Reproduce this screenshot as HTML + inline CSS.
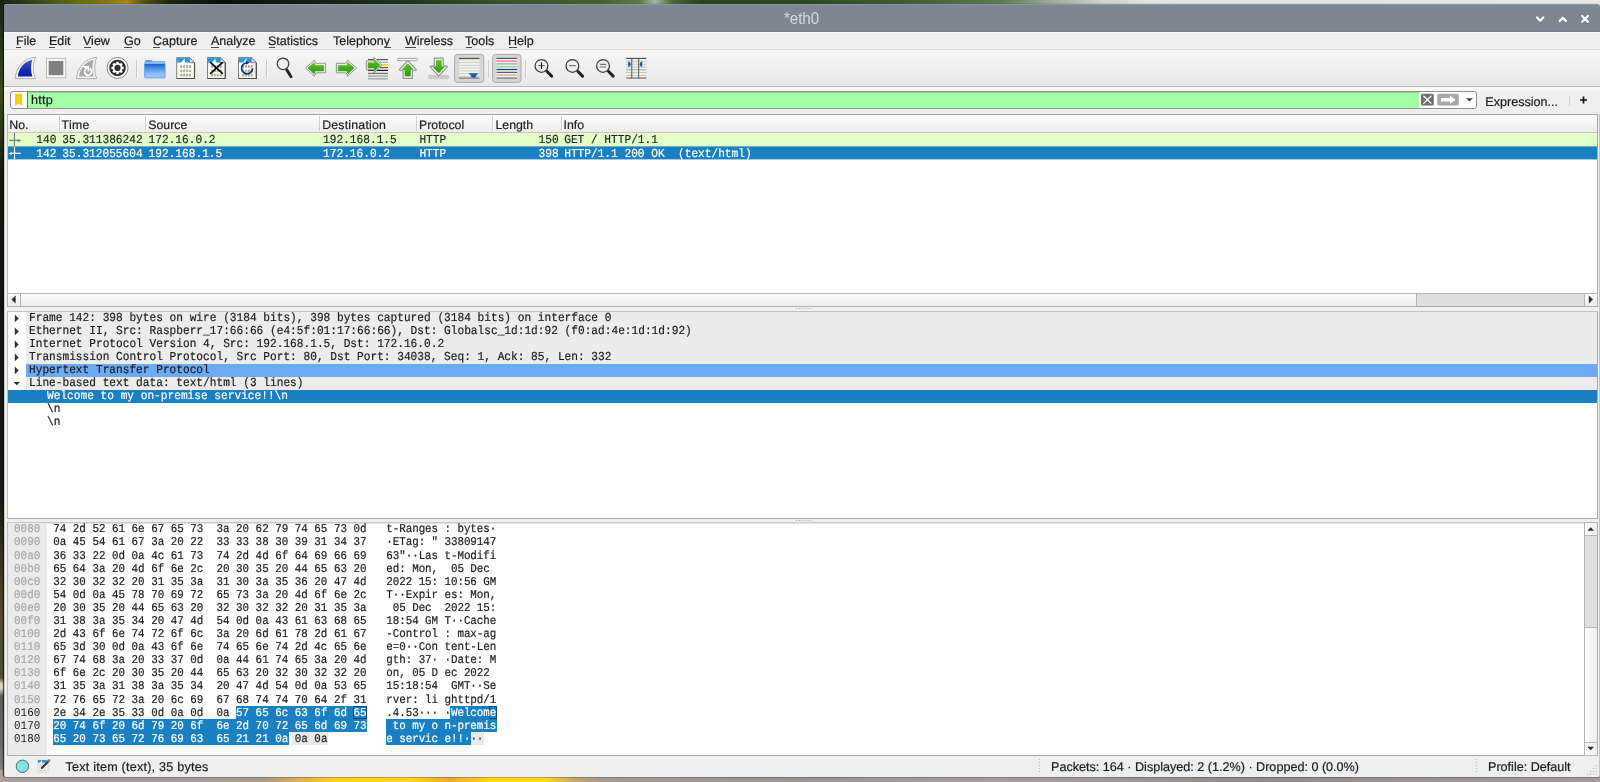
<!DOCTYPE html>
<html>
<head>
<meta charset="utf-8">
<title>*eth0</title>
<style>
*{box-sizing:border-box;margin:0;padding:0}
html,body{width:1600px;height:782px;overflow:hidden}
body{position:relative;will-change:transform;font-family:"Liberation Sans",sans-serif;font-size:12.3px;color:#1a1a1a;background:#20281a}
.abs,.abs>*{position:absolute}
.n{position:static!important}
svg{display:block;overflow:visible}
.ui{white-space:nowrap;color:#1c1c1c;font-size:12.3px;line-height:14px;-webkit-text-stroke:.2px currentColor;display:inline-block;text-rendering:geometricPrecision}
.ub{font-size:12.6px}
.mono{font-family:"Liberation Mono",monospace;white-space:pre;font-size:11.17px;line-height:13px;color:#1a1a1a;display:inline-block;text-rendering:geometricPrecision;transform:scaleY(1.09);transform-origin:0 9.5px;-webkit-text-stroke:.18px currentColor}
.hx{transform:scaleY(1.10)}
.ns{-webkit-text-stroke:0 currentColor}
#wp-top{left:0;top:0;width:1600px;height:6px;background:linear-gradient(90deg,#1a2414 0,#2a3416 20px,#56601a 60px,#7a7412 100px,#a88618 128px,#5a5414 142px,#20240f 170px,#0e120c 220px,#141c12 300px,#20341a 400px,#36562a 500px,#44642e 600px,#5a7a48 640px,#a8b8a0 655px,#4a6a38 672px,#2a4420 700px,#2a4a22 800px,#3e5e30 900px,#5a7a50 1000px,#a0a898 1050px,#d0d0c8 1100px,#e4e2de 1150px,#eae8e4 1600px)}
#wp-left{left:0;top:0;width:6px;height:782px;background:linear-gradient(180deg,#1a2414 0,#26321a 40px,#3c4a1c 90px,#2c3a18 130px,#141c10 170px,#10150f 300px,#1a1a14 500px,#3a3224 560px,#5a4a30 620px,#4a5030 655px,#505438 678px,#dcd4c4 684px,#d4d0c8 689px,#5c5c5a 696px,#6a6866 740px,#8a8684 782px)}
#wp-bot{left:0;top:770px;width:1600px;height:12px;background:linear-gradient(90deg,#a8a09b 0,#a59d98 200px,#a89a86 265px,#e0b050 300px,#fcd024 335px,#ffd820 410px,#eda832 450px,#ffd61e 490px,#ffd820 545px,#c8a868 572px,#a49a92 600px,#9c938e 800px,#a8a09c 1000px,#948b86 1250px,#a39b97 1600px)}
#win{left:4px;top:4px;width:1596px;height:773.4px;background:#efefef;border-radius:3px 3px 2px 2px;overflow:hidden;box-shadow:-1px 0 1px rgba(0,0,0,.75),0 1px 1px rgba(60,60,60,.25);border-left:1px solid #cfcfcf;border-right:1px solid #c4c4c4}
#title{left:0;top:0;width:1596px;height:28px;background:#7d8792;border-top:1px solid #8b96a3;border-bottom:1px solid #75808a}
#title .t{left:0;width:1595px;top:4.4px;text-align:center;color:#d6dade;font-size:16.4px;line-height:19px;transform:scaleX(.92);transform-origin:798px 0}
#menubar{left:0;top:28px;width:1596px;height:18px;background:#efefef;border-top:1px solid #f7f7f7}
#menubar span{top:1.3px;font-size:12.5px;line-height:14px;color:#1a1a1a;white-space:nowrap;-webkit-text-stroke:.2px currentColor;display:inline-block;text-rendering:geometricPrecision}
#menubar u{text-decoration:underline;text-underline-offset:1.2px;text-decoration-thickness:1px;text-decoration-color:#666}
#toolbar{left:0;top:45px;width:1596px;height:38px;background:linear-gradient(#f7f7f7,#e8e8e8);border-top:1px solid #dadada;border-bottom:1px solid #b9b9b9}
.sep{width:1px;background:#c9c9c9;box-shadow:1px 0 0 #f8f8f8}
.tbtn{background:#d5d5d5;border:1px solid #a2a2a2;border-radius:3px;box-shadow:inset 0 1px 2px rgba(0,0,0,.12)}
#filter{left:0;top:83px;width:1596px;height:27px;background:linear-gradient(#fcfcfc 0,#f8f8f8 3px,#efefef 5px)}
.frame{border:1px solid #a9a9a9;border-left-color:#bcbcbc;background:#fff}
.hdr{background:linear-gradient(#fdfdfd,#ededed);border-bottom:1px solid #c4c4c4}
.hdr i{top:1px;width:1px;height:15px;background:#cfcfcf;box-shadow:1px 0 0 #fff}
.hdr span{top:3px}
.sel{background:#1a80c2;color:#fff}
.sb{background:#dedede}
.sbh{background:linear-gradient(#fefefe,#ececec);border:1px solid #b4b4b4}
.sbv{background:linear-gradient(90deg,#fefefe,#ececec);border:1px solid #b4b4b4}
</style>
</head>
<body class="abs">
<div id="wp-top"></div><div id="wp-left"></div><div id="wp-bot"></div>
<div id="win"></div>
<div id="title" class="abs" style="left:4px;top:4px;border-radius:3px 3px 0 0"><div class="t">*eth0</div></div>
<svg style="left:0;top:0" width="1600" height="40" viewBox="0 0 1600 40">
<g fill="none" stroke="#fff" stroke-width="2.2" stroke-linecap="round" stroke-linejoin="round">
<path d="M1537 17.5 L1540.15 20.7 L1543.3 17.5"/>
<path d="M1559.7 21 L1562.85 17.8 L1566 21"/>
<path d="M1582.1 16 L1587.9 21.8 M1587.9 16 L1582.1 21.8"/>
</g></svg>
<div id="menubar" class="abs" style="left:4px;top:32px">
<span style="left:12px">File</span>
<span style="left:45px">Edit</span>
<span style="left:79px">View</span>
<span style="left:120px">Go</span>
<span style="left:149px">Capture</span>
<span style="left:207px">Analyze</span>
<span style="left:264px">Statistics</span>
<span style="left:329px">Telephony</span>
<span style="left:401px">Wireless</span>
<span style="left:461px">Tools</span>
<span style="left:504px">Help</span>
<i style="left:12.2px;top:14.3px;width:5.0px;height:1px;background:#4a4a4a"></i>
<i style="left:45.0px;top:14.3px;width:5.6px;height:1px;background:#4a4a4a"></i>
<i style="left:80.0px;top:14.3px;width:7.0px;height:1px;background:#4a4a4a"></i>
<i style="left:120.1px;top:14.3px;width:7.8px;height:1px;background:#4a4a4a"></i>
<i style="left:149.1px;top:14.3px;width:7.1px;height:1px;background:#4a4a4a"></i>
<i style="left:207.2px;top:14.3px;width:7.5px;height:1px;background:#4a4a4a"></i>
<i style="left:264.7px;top:14.3px;width:6.8px;height:1px;background:#4a4a4a"></i>
<i style="left:381.0px;top:14.3px;width:5.6px;height:1px;background:#4a4a4a"></i>
<i style="left:401.0px;top:14.3px;width:10.5px;height:1px;background:#4a4a4a"></i>
<i style="left:461.5px;top:14.3px;width:6.5px;height:1px;background:#4a4a4a"></i>
<i style="left:504.7px;top:14.3px;width:8.3px;height:1px;background:#4a4a4a"></i>
</div>
<div id="toolbar" style="left:4px;top:49px"></div>
<div class="sep" style="left:136px;top:60px;width:1px;height:18px;"></div>
<div class="sep" style="left:266px;top:60px;width:1px;height:18px;"></div>
<div class="sep" style="left:488px;top:60px;width:1px;height:18px;"></div>
<div class="sep" style="left:525px;top:60px;width:1px;height:18px;"></div>
<svg style="left:0;top:0" width="700" height="90" viewBox="0 0 700 90">
<defs>
<linearGradient id="gb" x1="0" y1="0" x2="0" y2="1"><stop offset="0" stop-color="#4458cc"/><stop offset=".55" stop-color="#1a30b4"/><stop offset="1" stop-color="#0c1ea8"/></linearGradient>
<linearGradient id="gg" x1="0" y1="0" x2="0" y2="1"><stop offset="0" stop-color="#66bd2c"/><stop offset="1" stop-color="#2a9a0c"/></linearGradient>
<linearGradient id="gf" x1="0" y1="0" x2="0" y2="1"><stop offset="0" stop-color="#0c5ac4"/><stop offset=".3" stop-color="#4a8ae2"/><stop offset=".7" stop-color="#8ebcf6"/><stop offset="1" stop-color="#9cc8fc"/></linearGradient>
<linearGradient id="gp" x1="0" y1="0" x2="0" y2="1"><stop offset=".25" stop-color="#ffffff"/><stop offset="1" stop-color="#fafae2"/></linearGradient>
</defs>
<g transform="translate(0 0)">
<path d="M15.1 78.6 C16 68 23 58.5 35.7 57.1 C32.8 63 32.6 72.5 35.5 78.6 Z" fill="#f5f5f5" stroke="#a9a9a9" stroke-width=".9" stroke-linejoin="round"/>
<path d="M17.8 76.6 C18.6 68.6 24 61.6 32.3 59.8 C30.6 64.5 30.6 71.5 32.4 76.6 Z" fill="url(#gb)"/></g>
<rect x="46.4" y="58.4" width="19.4" height="19.4" fill="#f7f7f7" stroke="#b6b6b6" stroke-width=".9"/>
<rect x="48.7" y="61" width="14.6" height="14.2" fill="#808080"/>
<g transform="translate(61.3 0)">
<path d="M15.1 78.6 C16 68 23 58.5 35.7 57.1 C32.8 63 32.6 72.5 35.5 78.6 Z" fill="#f5f5f5" stroke="#a9a9a9" stroke-width=".9" stroke-linejoin="round"/>
<path d="M17.8 76.6 C18.6 68.6 24 61.6 32.3 59.8 C30.6 64.5 30.6 71.5 32.4 76.6 Z" fill="#a9a9a9"/><path d="M24.2 69.4 A3.5 3.5 0 1 0 28.4 68.6" fill="none" stroke="#fff" stroke-width="1.7"/><path d="M20.9 66.1 H27.9 V71.2 H26.4 V69 L24.8 69.8 Z" fill="#fff"/></g>
<g>
<circle cx="117.55" cy="67.95" r="10.5" fill="#fdfdfd" stroke="#808080" stroke-width="1"/>
<circle cx="117.55" cy="67.95" r="8.3" fill="#2b2b2b"/>
<g stroke="#fff" stroke-width="2.4">
<line x1="117.55" y1="61.75" x2="117.55" y2="74.15"/><line x1="111.35" y1="67.95" x2="123.75" y2="67.95"/>
<line x1="113.17" y1="63.57" x2="121.93" y2="72.33"/><line x1="113.17" y1="72.33" x2="121.93" y2="63.57"/></g>
<circle cx="117.55" cy="67.95" r="4.9" fill="#fff"/>
<circle cx="117.55" cy="67.95" r="3.1" fill="#303030"/>
</g>
<g>
<path d="M144.6 62.2 Q144.6 60.1 146.6 60.1 H151.4 L152.8 61.2 H164 Q165.1 61.2 165.1 62.4 V65 H144.6 Z" fill="#5f9df0"/>
<rect x="144.6" y="63.6" width="20.5" height="14.3" rx=".8" fill="url(#gf)" stroke="#4a90f0" stroke-width=".7"/>
<rect x="145.4" y="62.2" width="18.9" height="1.5" fill="#aac2ea"/>
</g>
<g transform="translate(176.2 0)">
<path d="M.5 57.6 H13.2 L18.3 62.7 V78.5 H.5 Z" fill="url(#gp)" stroke="#707070" stroke-width=".9" stroke-linejoin="round"/><path d="M18.3 62.7 V78.5 H.5" fill="none" stroke="#4c4c4c" stroke-width="1.2" stroke-linejoin="round"/>
<path d="M1 58.1 H13 L13 62.6 H1 Z" fill="#1f9be6"/>
<path d="M4.2 62.9 C6.4 62 6.8 59.6 8.8 58.5 C8.2 60 8.4 61.8 9.9 62.9 Z" fill="#fefefa"/>
<path d="M13.2 57.6 V62.7 H18.3 Z" fill="#e9e9e2" stroke="#5e5e5e" stroke-width=".8" stroke-linejoin="round"/>
<g fill="#adada4"><rect x="4.0" y="65.1" width="2.1" height="2.8" rx=".7"/><rect x="6.9" y="65.1" width="2.1" height="2.8" rx=".7"/><rect x="9.8" y="65.1" width="2.1" height="2.8" rx=".7"/><rect x="12.7" y="65.1" width="2.1" height="2.8" rx=".7"/><rect x="4.0" y="69.4" width="2.1" height="2.8" rx=".7"/><rect x="6.9" y="69.4" width="2.1" height="2.8" rx=".7"/><rect x="9.8" y="69.4" width="2.1" height="2.8" rx=".7"/><rect x="12.7" y="69.4" width="2.1" height="2.8" rx=".7"/><rect x="4.0" y="73.8" width="2.1" height="2.8" rx=".7"/><rect x="6.9" y="73.8" width="2.1" height="2.8" rx=".7"/><rect x="9.8" y="73.8" width="2.1" height="2.8" rx=".7"/><rect x="12.7" y="73.8" width="2.1" height="2.8" rx=".7"/></g></g><g transform="translate(207 0)">
<path d="M.5 57.6 H13.2 L18.3 62.7 V78.5 H.5 Z" fill="url(#gp)" stroke="#707070" stroke-width=".9" stroke-linejoin="round"/><path d="M18.3 62.7 V78.5 H.5" fill="none" stroke="#4c4c4c" stroke-width="1.2" stroke-linejoin="round"/>
<path d="M1 58.1 H13 L13 62.6 H1 Z" fill="#1f9be6"/>
<path d="M4.2 62.9 C6.4 62 6.8 59.6 8.8 58.5 C8.2 60 8.4 61.8 9.9 62.9 Z" fill="#fefefa"/>
<path d="M13.2 57.6 V62.7 H18.3 Z" fill="#e9e9e2" stroke="#5e5e5e" stroke-width=".8" stroke-linejoin="round"/>
<g fill="#adada4"><rect x="4.0" y="65.1" width="2.1" height="2.8" rx=".7"/><rect x="6.9" y="65.1" width="2.1" height="2.8" rx=".7"/><rect x="9.8" y="65.1" width="2.1" height="2.8" rx=".7"/><rect x="12.7" y="65.1" width="2.1" height="2.8" rx=".7"/><rect x="4.0" y="69.4" width="2.1" height="2.8" rx=".7"/><rect x="6.9" y="69.4" width="2.1" height="2.8" rx=".7"/><rect x="9.8" y="69.4" width="2.1" height="2.8" rx=".7"/><rect x="12.7" y="69.4" width="2.1" height="2.8" rx=".7"/><rect x="4.0" y="73.8" width="2.1" height="2.8" rx=".7"/><rect x="6.9" y="73.8" width="2.1" height="2.8" rx=".7"/><rect x="9.8" y="73.8" width="2.1" height="2.8" rx=".7"/><rect x="12.7" y="73.8" width="2.1" height="2.8" rx=".7"/></g></g>
<path d="M210.7 62.7 L222.3 73.3 M222.3 62.7 L210.7 73.3" stroke="#0e0e0e" stroke-width="1.8" stroke-linecap="round"/>
<g transform="translate(238 0)">
<path d="M.5 57.6 H13.2 L18.3 62.7 V78.5 H.5 Z" fill="url(#gp)" stroke="#707070" stroke-width=".9" stroke-linejoin="round"/><path d="M18.3 62.7 V78.5 H.5" fill="none" stroke="#4c4c4c" stroke-width="1.2" stroke-linejoin="round"/>
<path d="M1 58.1 H13 L13 62.6 H1 Z" fill="#1f9be6"/>
<path d="M4.2 62.9 C6.4 62 6.8 59.6 8.8 58.5 C8.2 60 8.4 61.8 9.9 62.9 Z" fill="#fefefa"/>
<path d="M13.2 57.6 V62.7 H18.3 Z" fill="#e9e9e2" stroke="#5e5e5e" stroke-width=".8" stroke-linejoin="round"/>
<g fill="#adada4"><rect x="4.0" y="65.1" width="2.1" height="2.8" rx=".7"/><rect x="6.9" y="65.1" width="2.1" height="2.8" rx=".7"/><rect x="9.8" y="65.1" width="2.1" height="2.8" rx=".7"/><rect x="12.7" y="65.1" width="2.1" height="2.8" rx=".7"/><rect x="4.0" y="69.4" width="2.1" height="2.8" rx=".7"/><rect x="6.9" y="69.4" width="2.1" height="2.8" rx=".7"/><rect x="9.8" y="69.4" width="2.1" height="2.8" rx=".7"/><rect x="12.7" y="69.4" width="2.1" height="2.8" rx=".7"/><rect x="4.0" y="73.8" width="2.1" height="2.8" rx=".7"/><rect x="6.9" y="73.8" width="2.1" height="2.8" rx=".7"/><rect x="9.8" y="73.8" width="2.1" height="2.8" rx=".7"/><rect x="12.7" y="73.8" width="2.1" height="2.8" rx=".7"/></g></g>
<path d="M247.1 62.8 A5.5 5.5 0 1 0 252.6 68.3" fill="none" stroke="#16308e" stroke-width="1.7"/>
<path d="M245.9 60.6 L249.5 62.6 L246.3 64.8 Z" fill="#16308e"/>
<g><line x1="286.71" y1="69.74" x2="291.06" y2="76.69" stroke="#1e2224" stroke-width="3" stroke-linecap="round"/>
<circle cx="283" cy="63.8" r="5.8" fill="#eeeeea" stroke="#3a3e41" stroke-width="1.25"/></g>
<g>
<path d="M305.5 68.1 L314.4 60.1 L315.8 63.3 H325.6 V72.8 H315.8 L314.4 76.1 Z" fill="#fbfbfb" stroke="#929292" stroke-width="1" stroke-linejoin="round"/>
<path d="M307.9 68.1 L314.1 62.5 L315 65.4 H323.8 V70.9 H315 L314.1 73.8 Z" fill="url(#gg)" stroke="url(#gg)" stroke-width=".7" stroke-linejoin="round"/>
</g>
<g>
<path d="M356.5 68.1 L347.6 60.1 L346.2 63.3 H336.4 V72.8 H346.2 L347.6 76.1 Z" fill="#fbfbfb" stroke="#929292" stroke-width="1" stroke-linejoin="round"/>
<path d="M354.1 68.1 L347.9 62.5 L347 65.4 H338.2 V70.9 H347 L347.9 73.8 Z" fill="url(#gg)" stroke="url(#gg)" stroke-width=".7" stroke-linejoin="round"/>
</g>
<g>
<g stroke-width="1.2">
<line x1="368" y1="59.6" x2="388" y2="59.6" stroke="#5a5a5a"/>
<line x1="378" y1="62.3" x2="388" y2="62.3" stroke="#a8acb6"/>
<line x1="378" y1="65" x2="388" y2="65" stroke="#f7dc1e" stroke-width="2"/>
<line x1="378" y1="67.6" x2="388" y2="67.6" stroke="#50566a"/>
<line x1="368" y1="70.4" x2="388" y2="70.4" stroke="#111"/>
<line x1="368" y1="73.4" x2="388" y2="73.4" stroke="#6e6e6e"/>
<line x1="368" y1="76.1" x2="388" y2="76.1" stroke="#b0b0b0" stroke-width="1.7"/>
<line x1="368" y1="78.8" x2="388" y2="78.8" stroke="#969696"/>
</g>
<path d="M382 65.2 L374 57.2 V60.9 H366.3 V69.8 H374 V73 Z" fill="#fbfbfb" stroke="#929292" stroke-width="1" stroke-linejoin="round"/>
<path d="M380.3 65.3 L374.5 59.7 V62.8 H368 V68 H374.5 V71 Z" fill="url(#gg)" stroke="url(#gg)" stroke-width=".7" stroke-linejoin="round"/>
</g>
<g>
<path d="M407.7 60.7 L416.4 69.8 L412.3 71 V78.4 H403.2 V71 L399.1 69.8 Z" fill="#fbfbfb" stroke="#8f8f8f" stroke-width="1.1" stroke-linejoin="round"/>
<path d="M407.7 63.4 L413.2 69.4 L410.4 69.9 V76 H405 V69.9 L402.2 69.4 Z" fill="url(#gg)" stroke="url(#gg)" stroke-width=".7" stroke-linejoin="round"/>
<rect x="397.6" y="58.4" width="20.1" height="2.3" rx="1.15" fill="#fdfdfd" stroke="#8c8c8c" stroke-width=".8"/>
</g>
<g>
<rect x="428.2" y="75.3" width="20.6" height="3.3" rx="1.6" fill="#c9c9c9" stroke="#b9b9b9" stroke-width=".5"/>
<path d="M438.7 75.9 L447.5 66.6 L443.2 65.6 V58.1 H434.3 V65.6 L430 66.6 Z" fill="#fbfbfb" stroke="#8f8f8f" stroke-width="1.1" stroke-linejoin="round"/>
<path d="M438.7 73 L444.2 67 L441.3 66.4 V60.2 H436.2 V66.4 L433.2 67 Z" fill="url(#gg)" stroke="url(#gg)" stroke-width=".7" stroke-linejoin="round"/>
</g>
<g>
<rect x="454.6" y="54.4" width="29.2" height="28" rx="3" fill="#d6d6d6" stroke="#a4a4a4" stroke-width=".9"/>
<rect x="459" y="59" width="20.4" height="18.4" fill="#f4f4ee"/><g stroke="#c9c9c2" stroke-width=".9"><line x1="459" y1="59.9" x2="479.4" y2="59.9"/><line x1="459" y1="62.6" x2="479.4" y2="62.6"/><line x1="459" y1="65.35" x2="479.4" y2="65.35"/><line x1="459" y1="68.1" x2="479.4" y2="68.1"/><line x1="459" y1="70.85" x2="479.4" y2="70.85"/><line x1="459" y1="73.6" x2="479.4" y2="73.6"/><line x1="459" y1="76.3" x2="479.4" y2="76.3"/></g>
<line x1="459" y1="58.4" x2="479.4" y2="58.4" stroke="#4e4e4e" stroke-width="1.1"/>
<line x1="459" y1="78.1" x2="479.4" y2="78.1" stroke="#8c8c8c" stroke-width="1.5"/>
<path d="M468.4 73.2 H478.6 L475.8 76 V77.6 H471.2 V76 Z" fill="#1d57a8"/>
</g>
<g>
<rect x="492.6" y="54.4" width="28.4" height="28" rx="3" fill="#d6d6d6" stroke="#a4a4a4" stroke-width=".9"/>
<rect x="496.5" y="59" width="20.5" height="19" fill="#f6f6f2"/>
<g stroke-width="1.3">
<line x1="496.5" y1="58.4" x2="517" y2="58.4" stroke="#4e4e4e" stroke-width="1.1"/>
<line x1="496.5" y1="61.2" x2="517" y2="61.2" stroke="#f08a8a" stroke-width="1.6"/>
<line x1="496.5" y1="63.9" x2="517" y2="63.9" stroke="#a4aad2" stroke-width="1.5"/>
<line x1="496.5" y1="66.7" x2="517" y2="66.7" stroke="#78dc62"/>
<line x1="496.5" y1="69.5" x2="517" y2="69.5" stroke="#16379e"/>
<line x1="496.5" y1="72.4" x2="517" y2="72.4" stroke="#6f5184"/>
<line x1="496.5" y1="75.2" x2="517" y2="75.2" stroke="#d9ba8a" stroke-width="1.6"/>
<line x1="496.5" y1="78.1" x2="517" y2="78.1" stroke="#8f8f8f" stroke-width="1.7"/>
</g></g>
<g><line x1="546.87" y1="71.27" x2="551.68" y2="76.08" stroke="#1e2224" stroke-width="3" stroke-linecap="round"/>
<circle cx="541.5" cy="65.9" r="6.4" fill="#eeeeea" stroke="#3a3e41" stroke-width="1.25"/><path d="M538.2 65.6 H544.8" stroke="#6a6a6a" stroke-width="1.1"/><path d="M541.5 62.4 V69" stroke="#161616" stroke-width="1.2"/></g><g><line x1="577.77" y1="71.27" x2="582.58" y2="76.08" stroke="#1e2224" stroke-width="3" stroke-linecap="round"/>
<circle cx="572.4" cy="65.9" r="6.4" fill="#eeeeea" stroke="#3a3e41" stroke-width="1.25"/><path d="M569 65.6 H575.8" stroke="#6f6f6f" stroke-width="1.1"/></g><g><line x1="608.37" y1="71.27" x2="613.18" y2="76.08" stroke="#1e2224" stroke-width="3" stroke-linecap="round"/>
<circle cx="603" cy="65.9" r="6.4" fill="#eeeeea" stroke="#3a3e41" stroke-width="1.25"/><path d="M599.8 64.4 H606.2 M599.8 67 H606.2" stroke="#6f6f6f" stroke-width="1.1"/></g>
<g>
<rect x="626.2" y="58.6" width="20.2" height="19.6" fill="#f1f1ec"/>
<g stroke="#c6c6c0" stroke-width="1">
<line x1="626.2" y1="61.4" x2="646.4" y2="61.4"/><line x1="626.2" y1="64.2" x2="646.4" y2="64.2"/><line x1="626.2" y1="67" x2="646.4" y2="67"/><line x1="626.2" y1="69.8" x2="646.4" y2="69.8" stroke="#a5a5a0"/><line x1="626.2" y1="72.6" x2="646.4" y2="72.6"/><line x1="626.2" y1="75.4" x2="646.4" y2="75.4"/></g>
<line x1="626.2" y1="58.4" x2="646.4" y2="58.4" stroke="#474747" stroke-width="1.1"/>
<line x1="626.2" y1="78.1" x2="646.4" y2="78.1" stroke="#8f8f8f" stroke-width="1.6"/>
<line x1="631.8" y1="58.6" x2="631.8" y2="78.4" stroke="#575757" stroke-width="1"/>
<line x1="638.7" y1="58.6" x2="638.7" y2="78.4" stroke="#575757" stroke-width="1"/>
<path d="M628.2 61.4 C631.6 62 631.6 66.2 628.2 66.9 Z" fill="#1d57a8"/>
<path d="M642.2 61.4 C638.8 62 638.8 66.2 642.2 66.9 Z" fill="#1d57a8"/>
</g>
</svg>
<div id="filter" style="left:4px;top:87px"></div>
<div class="abs" style="left:10px;top:91px;width:1467px;height:18px;border:1px solid #8f8f8f;border-radius:3px;background:#fff;overflow:hidden"><div style="left:16px;top:0;width:1392px;height:16px;background:#a4ffa6;border-left:1px solid #6d6d6d;box-shadow:inset 0 1px 0 #8ad08c"></div></div>
<svg style="left:0;top:85px" width="1600" height="30" viewBox="0 85 1600 30"><path d="M15 93.8 H22.2 V106 L18.6 103.6 L15 106 Z" fill="#f2d20e"/><rect x="1421" y="93.8" width="12.8" height="11.8" rx="1.6" fill="#6f6f6f"/><path d="M1423.4 95.8 L1431.4 103.6 M1431.4 95.8 L1423.4 103.6" stroke="#fff" stroke-width="1.3"/><rect x="1437.2" y="93.8" width="21.6" height="11.8" rx="1.6" fill="#a9a9a9"/><path d="M1441 98 H1450 V95.6 L1455.4 99.7 L1450 103.8 V101.4 H1441 Z" fill="#fff"/><path d="M1466 98.2 H1472.8 L1469.4 101.6 Z" fill="#3a3a3a"/><path d="M1580 100 H1587 M1583.5 96.5 V103.5" stroke="#111" stroke-width="1.7"/></svg>
<span class="ui ub" style="left:31px;top:93px;letter-spacing:.23px">http</span>
<span class="ui ub" style="left:1485.3px;top:94.6px;">Expression...</span>
<div style="left:1569px;top:96px;width:1px;height:10px;background:#d0d0d0"></div>
<div class="frame" style="left:7px;top:114px;width:1591px;height:193px;"></div>
<div class="hdr abs" style="left:8px;top:115px;width:1589px;height:18px">
<i style="left:51px"></i>
<i style="left:137px"></i>
<i style="left:311px"></i>
<i style="left:408px"></i>
<i style="left:484px"></i>
<i style="left:553px"></i>
<span class="ui" style="left:1.3000000000000007px">No.</span>
<span class="ui" style="left:53.6px"><span class="n" style="letter-spacing:.3px">Time</span></span>
<span class="ui" style="left:140.3px">Source</span>
<span class="ui" style="left:314.2px"><span class="n" style="letter-spacing:.22px">Destination</span></span>
<span class="ui" style="left:411px">Protocol</span>
<span class="ui" style="left:487.5px">Length</span>
<span class="ui" style="left:555.5px">Info</span>
</div>
<div class="abs " style="left:8px;top:133px;width:1589px;height:14px;background:#e4ffc7;color:#12272e">
<span class="mono" style="left:28.299999999999997px;top:1.9px;color:inherit">140</span>
<span class="mono" style="left:54.3px;top:1.9px;color:inherit">35.311386242</span>
<span class="mono" style="left:140.6px;top:1.9px;color:inherit">172.16.0.2</span>
<span class="mono" style="left:315.1px;top:1.9px;color:inherit">192.168.1.5</span>
<span class="mono" style="left:411.4px;top:1.9px;color:inherit">HTTP</span>
<span class="mono" style="left:530.5px;top:1.9px;color:inherit">150</span>
<span class="mono" style="left:556.2px;top:1.9px;color:inherit">GET / HTTP/1.1</span>
</div>
<div class="abs sel" style="left:8px;top:146px;width:1589px;height:13px;transform:translateY(.4px)">
<span class="mono" style="left:28.299999999999997px;top:2.6px;color:inherit">142</span>
<span class="mono" style="left:54.3px;top:2.6px;color:inherit">35.312055604</span>
<span class="mono" style="left:140.6px;top:2.6px;color:inherit">192.168.1.5</span>
<span class="mono" style="left:315.1px;top:2.6px;color:inherit">172.16.0.2</span>
<span class="mono" style="left:411.4px;top:2.6px;color:inherit">HTTP</span>
<span class="mono" style="left:530.5px;top:2.6px;color:inherit">398</span>
<span class="mono" style="left:556.2px;top:2.6px;color:inherit">HTTP/1.1 200 OK  (text/html)</span>
</div>
<svg style="left:0;top:130px" width="40" height="32" viewBox="0 130 40 32"><path d="M14.5 133 V146.4 M9.3 140.4 H19" stroke="#737988" stroke-width="1.1" fill="none"/><path d="M18 138.9 L21.4 140.4 L18 141.9 Z" fill="#737988"/><path d="M14.5 146.4 V159.5 M10.6 153.4 H20.8" stroke="#fff" stroke-width="1.1" fill="none"/><path d="M11.6 151.9 L8.2 153.4 L11.6 154.9 Z" fill="#fff"/></svg>
<div class="sb" style="left:8px;top:293px;width:1589px;height:13px;border-top:1px solid #b4b4b4"></div>
<div class="sbh" style="left:7px;top:293px;width:14px;height:14px;"></div>
<div class="sbh" style="left:20px;top:293px;width:1397px;height:14px;"></div>
<div class="sbh" style="left:1584px;top:293px;width:14px;height:14px;"></div>
<svg style="left:0;top:290px" width="1600" height="20" viewBox="0 290 1600 20"><path d="M15.6 295.6 V303.6 L11.4 299.6 Z" fill="#2e2e2e"/><path d="M1588.8 295.6 V303.6 L1593 299.6 Z" fill="#2e2e2e"/></svg>
<div class="frame" style="left:7px;top:311px;width:1591px;height:208px;border-top-color:#c2c2c2"></div>
<div style="left:26px;top:312px;width:1571px;height:13px;background:#ececec"></div>
<span class="mono" style="left:29px;top:312.95px;">Frame 142: 398 bytes on wire (3184 bits), 398 bytes captured (3184 bits) on interface 0</span>
<div style="left:26px;top:325px;width:1571px;height:13px;background:#ececec"></div>
<span class="mono" style="left:29px;top:325.95px;">Ethernet II, Src: Raspberr_17:66:66 (e4:5f:01:17:66:66), Dst: Globalsc_1d:1d:92 (f0:ad:4e:1d:1d:92)</span>
<div style="left:26px;top:338px;width:1571px;height:13px;background:#ececec"></div>
<span class="mono" style="left:29px;top:338.95px;">Internet Protocol Version 4, Src: 192.168.1.5, Dst: 172.16.0.2</span>
<div style="left:26px;top:351px;width:1571px;height:13px;background:#ececec"></div>
<span class="mono" style="left:29px;top:351.95px;">Transmission Control Protocol, Src Port: 80, Dst Port: 34038, Seq: 1, Ack: 85, Len: 332</span>
<div style="left:26px;top:364px;width:1571px;height:13px;background:#6cabf3"></div>
<span class="mono" style="left:29px;top:364.95px;">Hypertext Transfer Protocol</span>
<div style="left:26px;top:377px;width:1571px;height:13px;background:#ececec"></div>
<span class="mono" style="left:29px;top:377.95px;">Line-based text data: text/html (3 lines)</span>
<div class="sel" style="left:8px;top:390px;width:1589px;height:13px;"></div>
<span class="mono" style="left:47px;top:390.95px;color:#fff">Welcome to my on-premise service!!\n</span>
<span class="mono" style="left:47px;top:403.95px;">\n</span>
<span class="mono" style="left:47px;top:416.95px;">\n</span>
<svg style="left:0;top:305px" width="40" height="130" viewBox="0 305 40 130"><path d="M14.8 314.6 V322.2 L18.7 318.4 Z" fill="#2e2e2e"/><path d="M14.8 327.6 V335.2 L18.7 331.4 Z" fill="#2e2e2e"/><path d="M14.8 340.6 V348.2 L18.7 344.4 Z" fill="#2e2e2e"/><path d="M14.8 353.6 V361.2 L18.7 357.4 Z" fill="#2e2e2e"/><path d="M14.8 366.6 V374.2 L18.7 370.4 Z" fill="#2e2e2e"/><path d="M13.6 381.9 H20 L16.8 385.3 Z" fill="#2e2e2e"/></svg>
<div class="frame" style="left:7px;top:522px;width:1591px;height:234px;border-top-color:#c8c8c8;box-shadow:inset 0 1px 0 #e4e4e4"></div>
<div style="left:8px;top:523px;width:39px;height:232px;background:#ebebeb"></div>
<span class="mono hx" style="left:14.10px;top:524.35px;font-size:10.88px;letter-spacing:0.001px;color:#a6a6a6;">0080</span>
<span class="mono hx" style="left:53.28px;top:524.35px;font-size:10.88px;letter-spacing:0.001px;">74 2d 52 61 6e 67 65 73  3a 20 62 79 74 65 73 0d</span>
<span class="mono hx" style="left:386.31px;top:524.35px;font-size:10.88px;letter-spacing:-0.059px;">t-Ranges : bytes·</span>
<span class="mono hx" style="left:14.10px;top:537.44px;font-size:10.88px;letter-spacing:0.001px;color:#a6a6a6;">0090</span>
<span class="mono hx" style="left:53.28px;top:537.44px;font-size:10.88px;letter-spacing:0.001px;">0a 45 54 61 67 3a 20 22  33 33 38 30 39 31 34 37</span>
<span class="mono hx" style="left:386.31px;top:537.44px;font-size:10.88px;letter-spacing:-0.059px;">·ETag: &quot; 33809147</span>
<span class="mono hx" style="left:14.10px;top:550.53px;font-size:10.88px;letter-spacing:0.001px;color:#a6a6a6;">00a0</span>
<span class="mono hx" style="left:53.28px;top:550.53px;font-size:10.88px;letter-spacing:0.001px;">36 33 22 0d 0a 4c 61 73  74 2d 4d 6f 64 69 66 69</span>
<span class="mono hx" style="left:386.31px;top:550.53px;font-size:10.88px;letter-spacing:-0.059px;">63&quot;··Las t-Modifi</span>
<span class="mono hx" style="left:14.10px;top:563.62px;font-size:10.88px;letter-spacing:0.001px;color:#a6a6a6;">00b0</span>
<span class="mono hx" style="left:53.28px;top:563.62px;font-size:10.88px;letter-spacing:0.001px;">65 64 3a 20 4d 6f 6e 2c  20 30 35 20 44 65 63 20</span>
<span class="mono hx" style="left:386.31px;top:563.62px;font-size:10.88px;letter-spacing:-0.059px;">ed: Mon,  05 Dec </span>
<span class="mono hx" style="left:14.10px;top:576.71px;font-size:10.88px;letter-spacing:0.001px;color:#a6a6a6;">00c0</span>
<span class="mono hx" style="left:53.28px;top:576.71px;font-size:10.88px;letter-spacing:0.001px;">32 30 32 32 20 31 35 3a  31 30 3a 35 36 20 47 4d</span>
<span class="mono hx" style="left:386.31px;top:576.71px;font-size:10.88px;letter-spacing:-0.059px;">2022 15: 10:56 GM</span>
<span class="mono hx" style="left:14.10px;top:589.8px;font-size:10.88px;letter-spacing:0.001px;color:#a6a6a6;">00d0</span>
<span class="mono hx" style="left:53.28px;top:589.8px;font-size:10.88px;letter-spacing:0.001px;">54 0d 0a 45 78 70 69 72  65 73 3a 20 4d 6f 6e 2c</span>
<span class="mono hx" style="left:386.31px;top:589.8px;font-size:10.88px;letter-spacing:-0.059px;">T··Expir es: Mon,</span>
<span class="mono hx" style="left:14.10px;top:602.89px;font-size:10.88px;letter-spacing:0.001px;color:#a6a6a6;">00e0</span>
<span class="mono hx" style="left:53.28px;top:602.89px;font-size:10.88px;letter-spacing:0.001px;">20 30 35 20 44 65 63 20  32 30 32 32 20 31 35 3a</span>
<span class="mono hx" style="left:386.31px;top:602.89px;font-size:10.88px;letter-spacing:-0.059px;"> 05 Dec  2022 15:</span>
<span class="mono hx" style="left:14.10px;top:615.98px;font-size:10.88px;letter-spacing:0.001px;color:#a6a6a6;">00f0</span>
<span class="mono hx" style="left:53.28px;top:615.98px;font-size:10.88px;letter-spacing:0.001px;">31 38 3a 35 34 20 47 4d  54 0d 0a 43 61 63 68 65</span>
<span class="mono hx" style="left:386.31px;top:615.98px;font-size:10.88px;letter-spacing:-0.059px;">18:54 GM T··Cache</span>
<span class="mono hx" style="left:14.10px;top:629.07px;font-size:10.88px;letter-spacing:0.001px;color:#a6a6a6;">0100</span>
<span class="mono hx" style="left:53.28px;top:629.07px;font-size:10.88px;letter-spacing:0.001px;">2d 43 6f 6e 74 72 6f 6c  3a 20 6d 61 78 2d 61 67</span>
<span class="mono hx" style="left:386.31px;top:629.07px;font-size:10.88px;letter-spacing:-0.059px;">-Control : max-ag</span>
<span class="mono hx" style="left:14.10px;top:642.16px;font-size:10.88px;letter-spacing:0.001px;color:#a6a6a6;">0110</span>
<span class="mono hx" style="left:53.28px;top:642.16px;font-size:10.88px;letter-spacing:0.001px;">65 3d 30 0d 0a 43 6f 6e  74 65 6e 74 2d 4c 65 6e</span>
<span class="mono hx" style="left:386.31px;top:642.16px;font-size:10.88px;letter-spacing:-0.059px;">e=0··Con tent-Len</span>
<span class="mono hx" style="left:14.10px;top:655.25px;font-size:10.88px;letter-spacing:0.001px;color:#a6a6a6;">0120</span>
<span class="mono hx" style="left:53.28px;top:655.25px;font-size:10.88px;letter-spacing:0.001px;">67 74 68 3a 20 33 37 0d  0a 44 61 74 65 3a 20 4d</span>
<span class="mono hx" style="left:386.31px;top:655.25px;font-size:10.88px;letter-spacing:-0.059px;">gth: 37· ·Date: M</span>
<span class="mono hx" style="left:14.10px;top:668.34px;font-size:10.88px;letter-spacing:0.001px;color:#a6a6a6;">0130</span>
<span class="mono hx" style="left:53.28px;top:668.34px;font-size:10.88px;letter-spacing:0.001px;">6f 6e 2c 20 30 35 20 44  65 63 20 32 30 32 32 20</span>
<span class="mono hx" style="left:386.31px;top:668.34px;font-size:10.88px;letter-spacing:-0.059px;">on, 05 D ec 2022 </span>
<span class="mono hx" style="left:14.10px;top:681.43px;font-size:10.88px;letter-spacing:0.001px;color:#a6a6a6;">0140</span>
<span class="mono hx" style="left:53.28px;top:681.43px;font-size:10.88px;letter-spacing:0.001px;">31 35 3a 31 38 3a 35 34  20 47 4d 54 0d 0a 53 65</span>
<span class="mono hx" style="left:386.31px;top:681.43px;font-size:10.88px;letter-spacing:-0.059px;">15:18:54  GMT··Se</span>
<span class="mono hx" style="left:14.10px;top:694.52px;font-size:10.88px;letter-spacing:0.001px;color:#a6a6a6;">0150</span>
<span class="mono hx" style="left:53.28px;top:694.52px;font-size:10.88px;letter-spacing:0.001px;">72 76 65 72 3a 20 6c 69  67 68 74 74 70 64 2f 31</span>
<span class="mono hx" style="left:386.31px;top:694.52px;font-size:10.88px;letter-spacing:-0.059px;">rver: li ghttpd/1</span>
<div class="sel" style="left:235.52px;top:706.11px;width:131.6px;height:13.2px;"></div>
<div class="sel" style="left:450.41px;top:706.11px;width:46.29px;height:13.2px;"></div>
<div style="left:352.86px;top:705.91px;width:14.46px;height:13.2px;border:1px solid rgba(8,36,64,.62)"></div>
<div style="left:489.03px;top:705.91px;width:7.87px;height:13.2px;border:1px solid rgba(8,36,64,.62)"></div>
<span class="mono hx ns" style="left:14.10px;top:707.61px;font-size:10.88px;letter-spacing:0.001px;color:#1a1a1a;">0160</span>
<span class="mono hx" style="left:53.28px;top:707.61px;font-size:10.88px;letter-spacing:0.001px;">2e 34 2e 35 33 0d 0a 0d  0a <b class="n" style="font-weight:normal;color:#fff">57 65 6c 63 6f 6d 65</b></span>
<span class="mono hx" style="left:386.31px;top:707.61px;font-size:10.88px;letter-spacing:-0.059px;">.4.53··· ·<b class="n" style="font-weight:normal;color:#fff">Welcome</b></span>
<div class="sel" style="left:52.68px;top:719.2px;width:314.44px;height:13.2px;"></div>
<div class="sel" style="left:385.71px;top:719.2px;width:110.99px;height:13.2px;"></div>
<span class="mono hx ns" style="left:14.10px;top:720.7px;font-size:10.88px;letter-spacing:0.001px;color:#1a1a1a;">0170</span>
<span class="mono hx" style="left:53.28px;top:720.7px;font-size:10.88px;letter-spacing:0.001px;"><b class="n" style="font-weight:normal;color:#fff">20 74 6f 20 6d 79 20 6f  6e 2d 70 72 65 6d 69 73</b></span>
<span class="mono hx" style="left:386.31px;top:720.7px;font-size:10.88px;letter-spacing:-0.059px;"><b class="n" style="font-weight:normal;color:#fff"> to my o n-premis</b></span>
<div class="sel" style="left:52.68px;top:732.29px;width:236.08px;height:13.2px;"></div>
<div class="sel" style="left:385.71px;top:732.29px;width:85.11px;height:13.2px;"></div>
<div style="left:291.69px;top:732.29px;width:36.25px;height:13.2px;background:#e9e9e9"></div>
<div style="left:470.82px;top:732.29px;width:12.94px;height:13.2px;background:#e9e9e9"></div>
<span class="mono hx ns" style="left:14.10px;top:733.79px;font-size:10.88px;letter-spacing:0.001px;color:#1a1a1a;">0180</span>
<span class="mono hx" style="left:53.28px;top:733.79px;font-size:10.88px;letter-spacing:0.001px;"><b class="n" style="font-weight:normal;color:#fff">65 20 73 65 72 76 69 63  65 21 21 0a</b> 0a 0a</span>
<span class="mono hx" style="left:386.31px;top:733.79px;font-size:10.88px;letter-spacing:-0.059px;"><b class="n" style="font-weight:normal;color:#fff">e servic e!!·</b>··</span>
<div class="sb" style="left:1584px;top:523px;width:13px;height:232px;border-left:1px solid #b4b4b4"></div>
<div class="sbv" style="left:1584px;top:522px;width:14px;height:14px;"></div>
<div class="sbv" style="left:1584px;top:627px;width:14px;height:116px;"></div>
<div class="sbv" style="left:1584px;top:742px;width:14px;height:14px;"></div>
<svg style="left:1580px;top:520px" width="20" height="240" viewBox="1580 520 20 240"><path d="M1587.3 530.7 H1594.1 L1590.7 527.2 Z" fill="#2e2e2e"/><path d="M1587.3 746.7 H1594.1 L1590.7 750.2 Z" fill="#2e2e2e"/></svg>
<svg style="left:0;top:300px" width="1600" height="230" viewBox="0 300 1600 230"><rect x="796.00" y="308" width="1.2" height="1.2" fill="#b2b2b2"/><rect x="796.00" y="309.2" width="1.2" height="1" fill="#fbfbfb"/><rect x="798.86" y="308" width="1.2" height="1.2" fill="#b2b2b2"/><rect x="798.86" y="309.2" width="1.2" height="1" fill="#fbfbfb"/><rect x="801.72" y="308" width="1.2" height="1.2" fill="#b2b2b2"/><rect x="801.72" y="309.2" width="1.2" height="1" fill="#fbfbfb"/><rect x="804.58" y="308" width="1.2" height="1.2" fill="#b2b2b2"/><rect x="804.58" y="309.2" width="1.2" height="1" fill="#fbfbfb"/><rect x="807.44" y="308" width="1.2" height="1.2" fill="#b2b2b2"/><rect x="807.44" y="309.2" width="1.2" height="1" fill="#fbfbfb"/><rect x="810.30" y="308" width="1.2" height="1.2" fill="#b2b2b2"/><rect x="810.30" y="309.2" width="1.2" height="1" fill="#fbfbfb"/><rect x="796.00" y="520" width="1.2" height="1.2" fill="#b2b2b2"/><rect x="796.00" y="521.2" width="1.2" height="1" fill="#fbfbfb"/><rect x="798.86" y="520" width="1.2" height="1.2" fill="#b2b2b2"/><rect x="798.86" y="521.2" width="1.2" height="1" fill="#fbfbfb"/><rect x="801.72" y="520" width="1.2" height="1.2" fill="#b2b2b2"/><rect x="801.72" y="521.2" width="1.2" height="1" fill="#fbfbfb"/><rect x="804.58" y="520" width="1.2" height="1.2" fill="#b2b2b2"/><rect x="804.58" y="521.2" width="1.2" height="1" fill="#fbfbfb"/><rect x="807.44" y="520" width="1.2" height="1.2" fill="#b2b2b2"/><rect x="807.44" y="521.2" width="1.2" height="1" fill="#fbfbfb"/><rect x="810.30" y="520" width="1.2" height="1.2" fill="#b2b2b2"/><rect x="810.30" y="521.2" width="1.2" height="1" fill="#fbfbfb"/></svg>
<svg style="left:0;top:756px" width="1600" height="22" viewBox="0 756 1600 22"><circle cx="22.4" cy="766.3" r="6.2" fill="#86e2e0" stroke="#3f6f6e" stroke-width="1"/><g><rect x="37.8" y="759.8" width="10.4" height="12.8" rx=".8" fill="#ebebe6" stroke="#d2d2cc" stroke-width=".6"/><rect x="38" y="760" width="8.6" height="2.6" fill="#2592e2"/><path d="M39.6 762.8 C40.6 762 40.8 760.8 41.6 760 C41.8 761 42 762.2 42.6 762.8 Z" fill="#f4f4f0"/><path d="M39.4 765.4 H42 M39.4 768 H41 M39.4 770.6 H45.6" stroke="#cfcfca" stroke-width=".8"/><path d="M48.9 760.7 L42.3 767.5" stroke="#333" stroke-width="2.1" stroke-linecap="round"/><path d="M49.3 760.3 L48.3 761.3" stroke="#777" stroke-width="2.1" stroke-linecap="round"/><path d="M41 768.9 L41.6 766.8 L43 768.2 Z" fill="#111"/></g><g stroke="#bdbdbd" stroke-width="1" stroke-dasharray="1 2"><line x1="1039.5" y1="759" x2="1039.5" y2="774"/><line x1="1476.5" y1="759" x2="1476.5" y2="774"/></g><g fill="#c6c6c6"><rect x="1595.6" y="765.2" width="1.3" height="1.3"/><rect x="1592.8" y="768" width="1.3" height="1.3"/><rect x="1595.6" y="768" width="1.3" height="1.3"/><rect x="1590" y="770.9" width="1.3" height="1.3"/><rect x="1592.8" y="770.9" width="1.3" height="1.3"/><rect x="1595.6" y="770.9" width="1.3" height="1.3"/><rect x="1587.2" y="773.7" width="1.3" height="1.3"/><rect x="1590" y="773.7" width="1.3" height="1.3"/><rect x="1592.8" y="773.7" width="1.3" height="1.3"/><rect x="1595.6" y="773.7" width="1.3" height="1.3"/></g></svg>
<span class="ui ub" style="left:65.5px;top:760px;letter-spacing:.22px">Text item (text), 35 bytes</span>
<span class="ui ub" style="left:1051px;top:760px;">Packets: 164 · Displayed: 2 (1.2%) · Dropped: 0 (0.0%)</span>
<span class="ui ub" style="left:1488px;top:760px;">Profile: Default</span>
</body>
</html>
